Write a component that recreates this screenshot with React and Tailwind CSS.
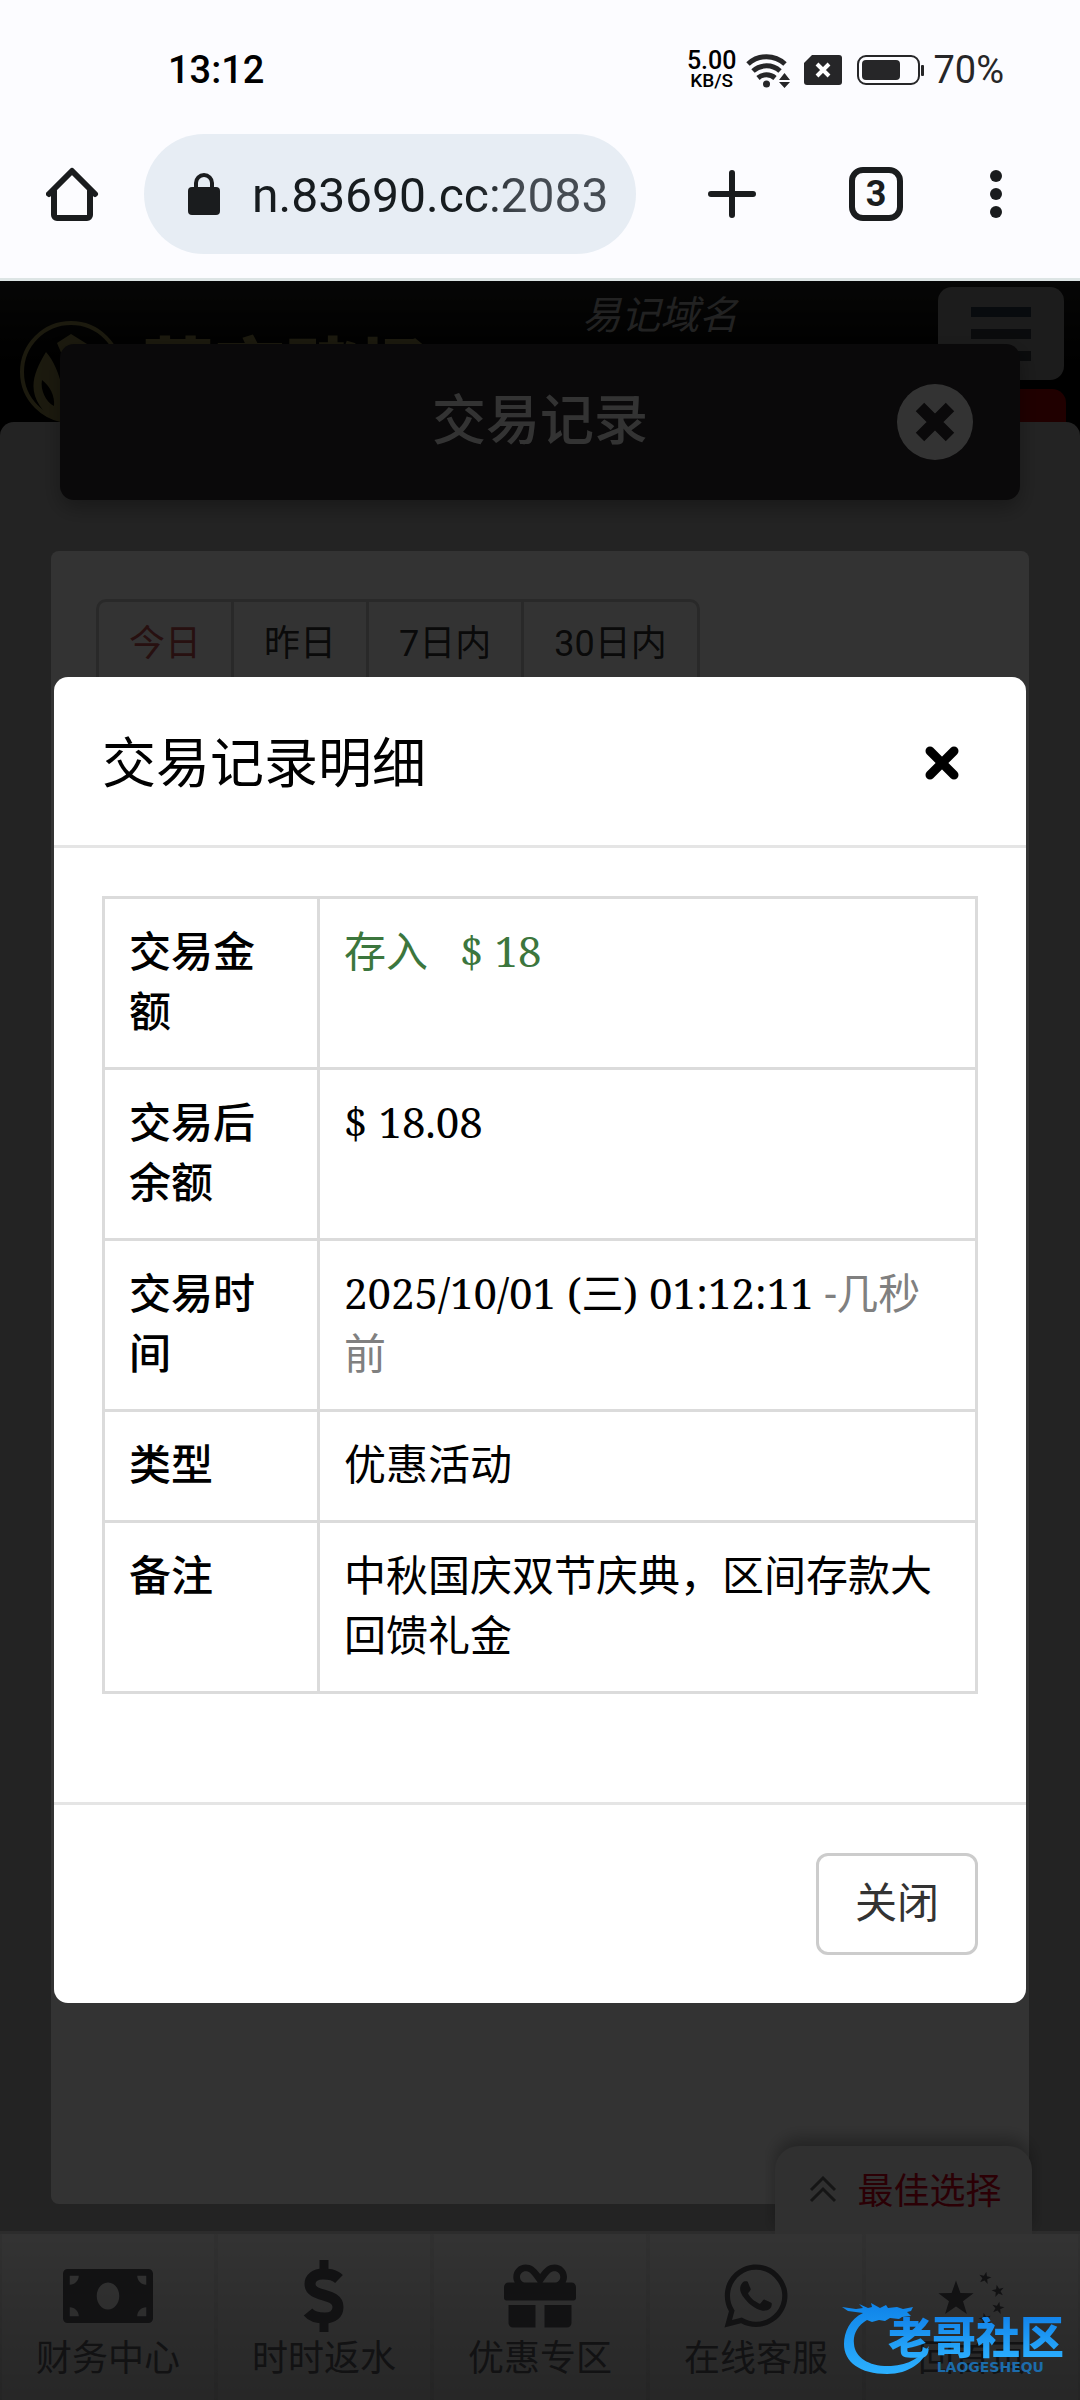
import { useState } from 'react'
import { FaMoneyBill, FaGift, FaWhatsapp } from 'react-icons/fa'

const ranges = ['今日', '昨日', '7日内', '30日内']

const StatusBar = () => (
  <div className="h-16 pl-[168px] pr-[76px] flex items-center justify-between">
    <span className="text-[38px] leading-none font-medium text-black">13:12</span>
    <div className="flex items-center text-[#262628]">
      <div className="flex flex-col items-center font-medium text-black mr-[10px]">
        <span className="text-[25px] leading-[22px]">5.00</span>
        <span className="text-[19px] leading-[18px]">KB/S</span>
      </div>
      <svg className="w-[44px] h-[36px] mr-[14px]" viewBox="0 0 44 36" fill="none" stroke="currentColor" strokeWidth="5">
        <path d="M2 12a27 27 0 0 1 37 0" />
        <path d="M7 19a20 20 0 0 1 27 0" />
        <path d="M12 26a13 13 0 0 1 17 0" />
        <circle cx="20.500" cy="32" r="3.500" fill="currentColor" stroke="none" />
        <path d="M33 28l5.500-7 5.500 7zM33 30h11l-5.500 6z" fill="currentColor" stroke="none" />
      </svg>
      <svg className="w-[38px] h-[30px] mr-[15px]" viewBox="0 0 38 30">
        <path d="M8 0h27a3 3 0 0 1 3 3v24a3 3 0 0 1-3 3H3a3 3 0 0 1-3-3V8z" fill="currentColor" />
        <path d="M13 9l12 12M25 9L13 21" stroke="#fff" strokeWidth="4" />
      </svg>
      <svg className="w-[67px] h-[30px] mr-[9px]" viewBox="0 0 67 30">
        <rect x="1" y="1" width="61" height="28" rx="8" fill="none" stroke="currentColor" strokeWidth="2" />
        <rect x="5" y="5" width="38" height="20" rx="4" fill="currentColor" />
        <rect x="64" y="10" width="3" height="11" rx="1" fill="currentColor" />
      </svg>
      <span className="text-[38px] leading-none">70%</span>
    </div>
  </div>
)

const BrowserBar = () => (
  <div className="mt-8 mb-6 pl-[46px] pr-[78px] flex items-center text-[#1a1c1e]">
    <button type="button" aria-label="主页" className="mr-[44px]">
      <svg className="w-[54px] h-[54px]" viewBox="0 0 54 54" fill="none" stroke="currentColor" strokeWidth="6" strokeLinecap="round" strokeLinejoin="round">
        <path d="M3 27L26 4l23 23" />
        <path d="M8 24v24a3 3 0 0 0 3 3h30a3 3 0 0 0 3-3V24" />
      </svg>
    </button>
    <label className="flex-1 min-w-0 h-[120px] rounded-full bg-[#e7edf4] pl-[44px] pr-6 flex items-center">
      <svg className="w-[32px] h-[42px] mr-[32px] shrink-0" viewBox="0 0 32 42">
        <rect y="14" width="32" height="28" rx="4" fill="currentColor" />
        <path d="M8 16v-6a8 8 0 0 1 16 0v6" fill="none" stroke="currentColor" strokeWidth="4" />
      </svg>
      <input
        type="text"
        aria-label="网址"
        readOnly
        value="n.83690.cc:2083"
        className="w-full min-w-0 pt-1 text-[48px] leading-[60px] bg-linear-to-r from-[#171c1f] from-60% to-[#454b52] to-75% bg-clip-text text-transparent outline-none"
      />
    </label>
    <button type="button" aria-label="新标签页" className="ml-[72px]">
      <svg className="w-[48px] h-[48px]" viewBox="0 0 48 48" stroke="currentColor" strokeWidth="6" strokeLinecap="round">
        <path d="M24 3v42M3 24h42" />
      </svg>
    </button>
    <button type="button" className="ml-[93px] w-[54px] h-[54px] rounded-[14px] border-6 border-[#1a1c1e] flex items-center justify-center text-[36px] leading-none font-bold">
      3
    </button>
    <button type="button" aria-label="更多" className="ml-[87px]">
      <svg className="w-[12px] h-[48px]" viewBox="0 0 12 48" fill="currentColor">
        <circle cx="6" cy="6" r="6" />
        <circle cx="6" cy="24" r="6" />
        <circle cx="6" cy="42" r="6" />
      </svg>
    </button>
  </div>
)

const SiteHeader = () => (
  <header className="h-[141px] relative flex items-start overflow-hidden bg-linear-to-b from-[#20201f] to-black">
    <svg className="w-[104px] h-[104px] ml-[20px] mt-[39px] shrink-0" viewBox="0 0 104 104">
      <circle cx="51" cy="52" r="49" fill="none" stroke="#8a8148" strokeWidth="4" />
      <path d="M37 23L51 14l16 10-16 32z" fill="#8a8148" />
      <path d="M26 32C14 52 8 68 20 86c12 18 26 16 30 14C44 80 42 50 26 32z" fill="#8a8148" />
      <path d="M22 60c-2 10 4 22 12 26 1-10-4-20-12-26z" fill="#000" />
    </svg>
    <div className="ml-[18px] mt-[52px] text-[72px] leading-[80px] font-black text-[#8a8148] whitespace-nowrap">葡京赌场</div>
    <a href="#domain" className="absolute left-[582px] top-[10px] text-[39px] leading-[50px] italic text-[#a8a8a8]">易记域名</a>
    <button type="button" aria-label="菜单" className="absolute right-[16px] top-[6px] w-[126px] h-[93px] rounded-[14px] bg-[#8c8c8c] flex flex-col items-center pt-5 gap-3">
      <span className="w-[60px] h-[10px] bg-[#2b3a48]"></span>
      <span className="w-[60px] h-[10px] bg-[#343a40]"></span>
      <span className="w-[60px] h-[10px] bg-[#343a40]"></span>
    </button>
    <span className="absolute right-[14px] top-[108px] w-[120px] h-[60px] rounded-[14px] bg-[#a00000]"></span>
  </header>
)

const Records = () => {
  const [range, setRange] = useState('今日')

  return (
    <main className="flex-1 flex flex-col rounded-t-[14px] bg-[#b0b0b0]">
      <div className="relative z-10 -mt-[78px] mx-[60px] h-[156px] rounded-[14px] bg-[#322d32] shadow-[0_8px_20px_rgba(0,0,0,0.3)] flex items-center justify-center">
        <h1 className="text-[54px] leading-none font-medium text-white">交易记录</h1>
        <button type="button" aria-label="返回" className="absolute right-[47px] top-[40px]">
          <svg className="w-[76px] h-[76px]" viewBox="0 0 76 76">
            <circle cx="38" cy="38" r="38" fill="#fff" />
            <path d="M23 23l30 30M53 23L23 53" stroke="#322d32" strokeWidth="12" />
          </svg>
        </button>
      </div>
      <div className="flex-1 mt-[51px] mx-[51px] mb-[27px] rounded-[8px] bg-white px-[45px] pt-[48px]">
        <div className="inline-flex rounded-[10px] border-3 border-[#cccccc] divide-x-3 divide-[#cccccc]">
          {ranges.map((item) => (
            <button
              key={item}
              type="button"
              onClick={() => setRange(item)}
              className={`h-[84px] px-[30px] text-[36px] leading-none ${item === range ? 'text-[#c2504f]' : 'text-[#333333]'}`}
            >
              {item}
            </button>
          ))}
        </div>
      </div>
    </main>
  )
}

const DollarIcon = () => (
  <svg className="w-[44px] h-[72px]" viewBox="0 0 44 72" fill="none" stroke="currentColor">
    <path d="M22 0v12M22 60v12" strokeWidth="9" />
    <path d="M37 19C32 14 26 14 21 14C13 14 8 18 8 24C8 38 36 32 36 47C36 54 31 58 23 58C16 58 10 57 6 52" strokeWidth="11" />
  </svg>
)

const star = 'M0-10L2.400-3.200L9.500-3.100L3.800 1.200L5.900 8.100L0 4L-5.900 8.100L-3.800 1.200L-9.500-3.100L-2.400-3.200Z'

const StarsIcon = () => (
  <svg className="w-[72px] h-[72px]" viewBox="0 0 72 72" fill="currentColor">
    <path d={star} transform="translate(20 39) scale(1.850)" />
    <path d={star} transform="translate(49 18) rotate(12) scale(0.650)" />
    <path d={star} transform="translate(62 31) rotate(-12) scale(0.650)" />
    <path d={star} transform="translate(62 48) rotate(12) scale(0.650)" />
    <path d={star} transform="translate(49 59) rotate(-12) scale(0.650)" />
  </svg>
)

const tabs = [
  { label: '财务中心', icon: <FaMoneyBill className="w-[90px] h-[72px]" /> },
  { label: '时时返水', icon: <DollarIcon /> },
  { label: '优惠专区', icon: <FaGift className="w-[72px] h-[72px]" /> },
  { label: '在线客服', icon: <FaWhatsapp className="w-[72px] h-[72px]" /> },
  { label: '回首页', icon: <StarsIcon /> },
]

const BottomNav = () => (
  <nav className="relative h-[169px] border-t-3 border-[#dddddd] bg-linear-to-b from-white to-[#c0c0c0] text-[#5a5a62]">
    <button type="button" className="absolute right-[48px] bottom-full w-[257px] h-[88px] pl-1 rounded-t-[24px] bg-[#eeeeee] shadow-[0_-8px_16px_rgba(0,0,0,0.3)] [clip-path:inset(-30px_-10px_0px_-10px)] flex items-center justify-center gap-5 text-[36px] leading-none text-[#d6001c]">
      <svg className="w-[28px] h-[28px] text-[#6b6b6b]" viewBox="0 0 28 28" fill="none" stroke="currentColor" strokeWidth="3">
        <path d="M2 14L14 2l12 12M2 25l12-12 12 12" />
      </svg>
      <span className="pt-1">最佳选择</span>
    </button>
    <div className="h-full grid grid-cols-5">
      {tabs.map((tab) => (
        <a key={tab.label} href="#tab" className="flex flex-col items-center pt-[26px] border-x-2 border-black/5 text-[36px] leading-[54px]">
          {tab.icon}
          <span>{tab.label}</span>
        </a>
      ))}
    </div>
  </nav>
)

const serif = "leading-none font-['Noto_Serif','Liberation_Serif','Noto_Sans_CJK_SC',serif]"

const rows = [
  {
    label: '交易金额',
    value: (
      <span className="text-[#3c763d]">
        存入<span className={`ml-8 ${serif}`}>$ 18</span>
      </span>
    ),
  },
  {
    label: '交易后余额',
    value: <span className={serif}>$ 18.08</span>,
  },
  {
    label: '交易时间',
    value: (
      <>
        <span className={serif}>2025/10/01 (三) 01:12:11 </span>
        <span className="text-[#808080]">-几秒前</span>
      </>
    ),
  },
  { label: '类型', value: '优惠活动' },
  { label: '备注', value: '中秋国庆双节庆典，区间存款大回馈礼金' },
]

const DetailModal = () => (
  <div className="absolute inset-0 z-20 bg-black/80">
    <div role="dialog" aria-labelledby="detail-title" className="mx-[54px] mt-[396px] rounded-[14px] bg-white text-black">
      <div className="h-[171px] pl-12 pr-[67px] pt-1 flex items-center justify-between border-b-3 border-[#e5e5e5]">
        <h2 id="detail-title" className="pt-1 text-[54px] leading-none">交易记录明细</h2>
        <button type="button" aria-label="关闭窗口">
          <svg className="w-[34px] h-[34px]" viewBox="0 0 34 34" stroke="currentColor" strokeWidth="9" strokeLinecap="round">
            <path d="M5 5l24 24M29 5L5 29" />
          </svg>
        </button>
      </div>
      <div className="px-12 pt-12 pb-[108px]">
        <table className="w-full table-fixed border-collapse text-[42px] leading-[60px]">
          <colgroup>
            <col className="w-[215px]" />
            <col />
          </colgroup>
          <tbody>
            {rows.map((row) => (
              <tr key={row.label}>
                <th scope="row" className="border-3 border-[#dbdbdb] px-6 py-6 text-left align-top font-medium">{row.label}</th>
                <td className="border-3 border-[#dbdbdb] px-6 py-6 align-top">{row.value}</td>
              </tr>
            ))}
          </tbody>
        </table>
      </div>
      <div className="px-12 py-12 flex justify-end border-t-3 border-[#e5e5e5]">
        <button type="button" className="h-[102px] px-[36px] rounded-[12px] border-3 border-[#cccccc] text-[42px] leading-none text-[#333333]">关闭</button>
      </div>
    </div>
  </div>
)

const Watermark = () => (
  <div className="absolute z-30 right-[16px] bottom-[26px] w-[222px] h-[72px]">
    <svg className="absolute inset-0 w-full h-full" viewBox="0 0 222 72">
      <defs>
        <linearGradient id="wave" x1="0" y1="0" x2="0" y2="1">
          <stop offset="0" stopColor="#0f83e8" />
          <stop offset="1" stopColor="#2cb0ff" />
        </linearGradient>
      </defs>
      <path
        fill="url(#wave)"
        d="M0 5l14 2 7-1-4-4 9 4 4-1-1-4 9 5 6-3 2 3 9-1 6 2 10-2-2 4-4 1 4 4-9 1-3 2-9-1-5 3-6-1-7 2-5-2-3 2C14 26 11 34 12 42c1 14 16 23 37 22 18-1 30-9 38-20-4 16-20 28-42 28C18 72 2 60 2 42 2 30 8 17 21 11L6 9z"
      />
    </svg>
    <div className="absolute right-0 top-[15px] text-[44px] leading-[44px] font-black whitespace-nowrap bg-linear-to-b from-[#1384ea] to-[#2cb0ff] bg-clip-text text-transparent">老哥社区</div>
    <div className="absolute right-[20px] bottom-0 text-[14px] leading-[14px] font-bold font-['DejaVu_Sans',sans-serif] text-[#1c6cab]">LAOGESHEQU</div>
  </div>
)

export default function App() {
  return (
    <div lang="zh-CN" className="relative min-h-screen flex flex-col bg-black font-['Roboto','Noto_Sans_CJK_SC',sans-serif]">
      <div className="pt-[38px] bg-[#fcfcff] border-b-3 border-[#dde5e5]">
        <StatusBar />
        <BrowserBar />
      </div>
      <div className="relative flex-1 flex flex-col">
        <SiteHeader />
        <Records />
        <BottomNav />
        <DetailModal />
      </div>
      <Watermark />
    </div>
  )
}
